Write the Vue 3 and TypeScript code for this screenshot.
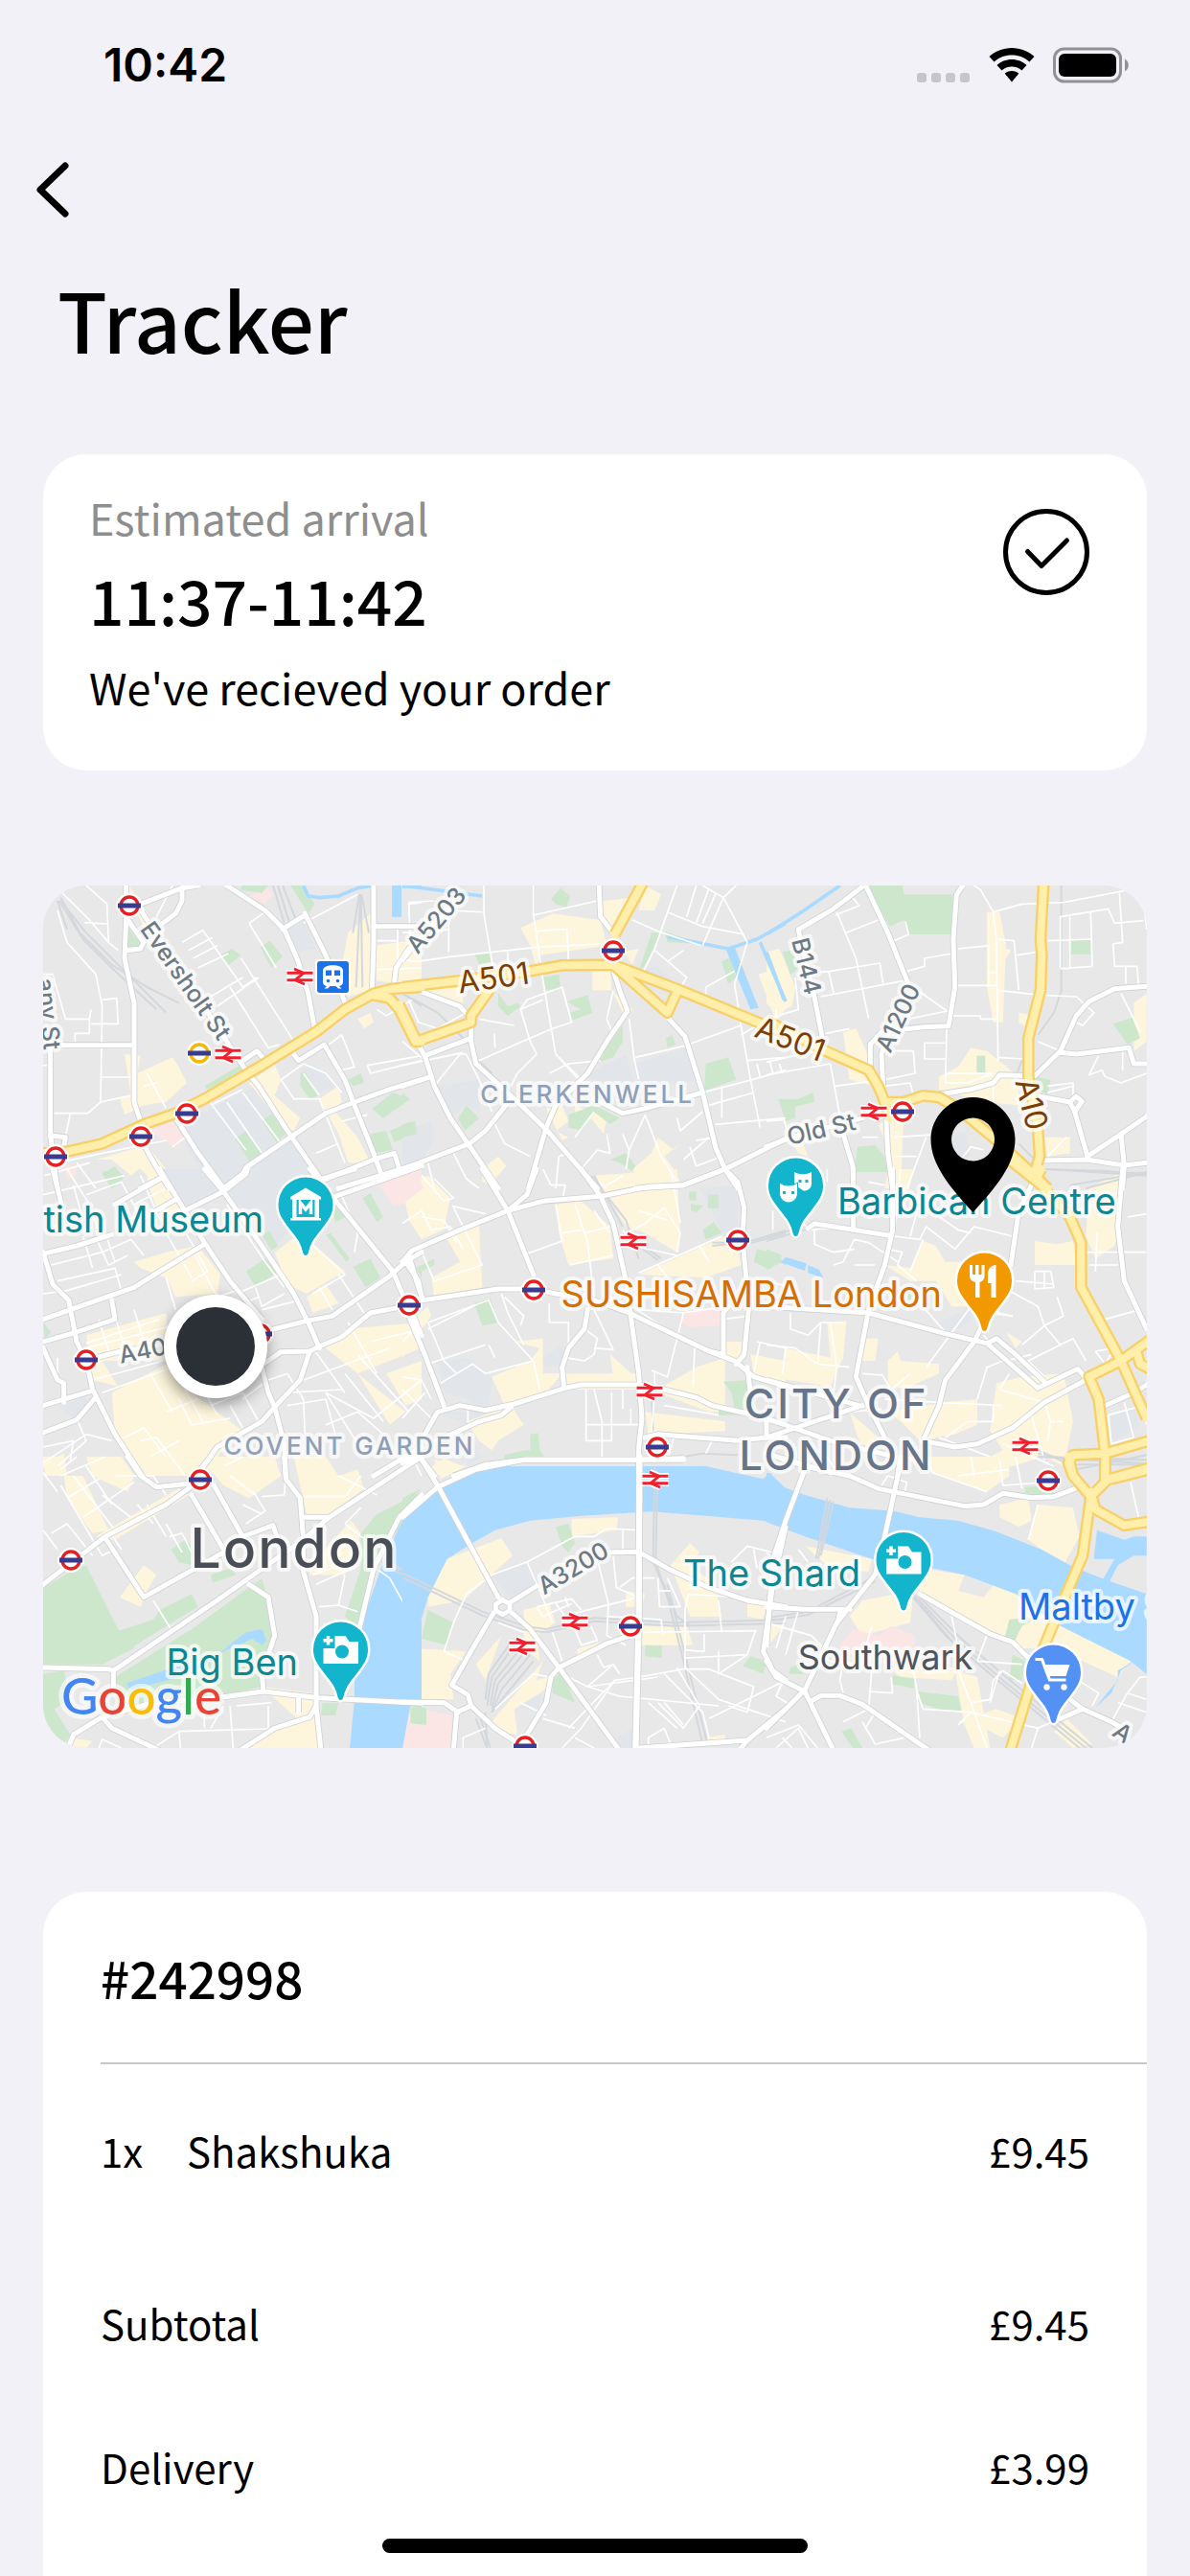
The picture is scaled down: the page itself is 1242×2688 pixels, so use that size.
<script setup lang="ts">
interface Tile {
  x: number
  y: number
  built: string[]
  campus: string[]
  park: string[]
  health: string[]
  water: string[]
  canal: string[]
  rail: string[]
  lane: string[]
  road: string[]
  trunk: string[]
}
interface Label {
  text: string
  x: number
  y: number
  kind: string
  turn?: number
}
interface Spot {
  x: number
  y: number
}
interface OrderLine {
  label: string
  price: string
}

// Map sheets: each covers 400 x 320 units, plotted at three points per unit.
const tiles: Tile[] = [
  {
    x: 40, y: 920,
    built: ['275,0 330,80 370,150 345,170 300,80', '970,160 1040,100 1040,340 970,360 940,310', '1050,200 1200,180 1200,330 1060,310', '270,540 320,545 310,600 420,550 440,580 465,630 400,690 330,700 270,730 255,680 290,670', '660,630 740,570 760,620 740,670 820,740 800,780 770,770', '880,680 940,640 950,690 930,720 1000,800 1040,880 970,880 940,790', '320,800 400,900 440,960 380,960 300,880', '180,870 320,830 340,880 290,920 230,870', '1000,430 1040,410 1050,440 1020,460'],
    campus: ['430,760 680,640 790,790 650,880 570,960 490,880', '770,150 830,120 870,210 810,220', '650,890 800,800 900,930 860,960 580,960', '820,590 860,570 930,640 880,660'],
    park: ['278,140 325,200 280,210', '570,230 605,210 635,230 590,265', '695,205 725,185 765,235 730,270', '520,640 640,570 650,590 530,650', '820,600 835,595 880,670 850,680 820,640', '970,620 1010,600 1020,630 985,640', '1045,710 1110,660 1165,680 1080,740', '1100,780 1170,750 1185,785 1115,815', '1040,790 1090,780 1110,840 1050,850', '615,805 650,780 700,850 660,875', '700,750 730,725 775,790 745,815', '200,915 240,890 265,930 230,960', '640,12 720,12 700,35 630,25', '790,12 830,12 865,70 845,100'],
    health: ['660,45 720,20 735,40 710,70', '350,780 420,750 460,810 420,830 380,800', '80,880 120,900 110,930 90,930', '1065,930 1200,880 1200,960 1080,960'],
    water: ['1107,12 1137,12 1137,110 1107,110', '1140,12 1200,12 1200,22 1140,20'],
    canal: ['830,12 845,45 880,50 940,45 1000,20 1050,12'],
    rail: ['70,50 130,160 230,260 340,330 440,380', '70,60 150,160 240,250 400,410', '65,60 140,180 230,270 370,400', '60,60 90,150', '735,12 770,130', '750,12 785,125', '765,12 805,115', '1005,40 985,160', '1008,40 995,330', '1010,40 1015,330', '1012,40 1035,160', '1140,350 1200,390'],
    lane: ['70,30 160,120 220,190 250,215', '150,12 215,70 220,190', '145,128 215,132', '60,90 90,190 180,290 200,390 195,690', '15,290 45,290 85,430 160,430 165,400', '200,370 245,365 250,445 165,445', '115,500 115,475 160,475 160,430', '195,612 300,612', '50,725 155,725 195,690 310,665', '100,725 85,800', '450,190 515,152 640,330 685,300', '470,215 545,175', '485,240 560,200', '500,270 595,225', '540,360 640,300', '660,130 710,95', '660,130 745,270', '560,390 690,300', '600,330 720,520 755,510', '635,240 800,500', '420,12 370,110', '330,640 370,630', '340,600 400,710', '830,130 1000,40', '1055,185 1125,185', '1060,275 1200,270', '1125,150 1125,250', '1160,110 1160,70 1200,65', '760,620 830,570 900,600 950,660', '760,620 800,680 880,680 960,880', '830,600 880,670', '1030,575 1200,545', '1030,575 1040,600 1200,560', '910,510 950,480 990,580 950,590', '950,750 1030,730', '870,850 940,820', '1060,400 1090,420 1170,370', '590,690 700,850', '640,660 760,820', '530,680 650,840', '60,880 200,850 400,810', '120,880 180,960', '15,575 35,575', '20,920 160,880', '420,830 460,800', '540,700 640,650'],
    road: ['275,12 275,120 270,240 300,380 300,500 300,690 320,750', '320,70 450,20 450,60 430,100 390,130', '450,20 500,12', '590,12 710,90 770,150 810,240 845,350 865,460', '325,95 360,150 570,470 650,590 690,640 780,780 890,940', '280,120 330,190 320,210 275,215', '40,512 300,512', '38,500 38,790 45,860 60,960', '38,795 85,800 80,830', '835,100 900,230 965,390', '765,148 835,105', '1050,12 1050,200 1045,340', '1050,140 1200,140', '1200,180 1160,210 1120,270 1110,360', '800,540 815,560 895,510 960,620 990,700 1050,850 1075,920', '640,560 685,530 710,560', '1200,620 1100,650 990,690 900,725 790,800 650,895 640,915 580,960', '430,740 500,850 580,960', '320,800 350,860 410,960', '890,935 1050,870 1115,850 1130,900', '940,960 1200,880', '320,960 390,925'],
    trunk: ['-15,850 15,850 90,845 200,820 330,760 430,725 520,680 700,575 870,470 960,400 1050,350 1110,335 1200,330', '1050,355 1100,365 1130,400 1180,500 1200,500'],
  },
  {
    x: 420, y: 920,
    built: ['370,145 470,100 620,120 640,200 430,230 420,270 400,200', '630,60 720,50 680,130 650,160 620,100', '760,12 810,40 790,90 740,90', '595,270 650,270 655,340 595,340', '0,200 40,180 60,300 0,320', '450,710 500,700 520,750 480,780 520,800 500,810', '540,700 640,740 630,790 590,740 540,780', '690,220 740,210 720,260', '1115,290 1145,280 1200,400 1170,440', '1150,220 1180,210 1200,260 1200,300', '655,340 720,400 700,430', '720,900 780,850 800,800 850,840 870,820 820,860 850,900 870,940 740,940', '250,900 300,860 325,890 290,930 300,960 250,940', '80,340 190,310 190,380 130,360'],
    campus: ['720,570 890,520 930,620 740,650', '0,780 90,750 100,800 60,880 0,890', '100,640 240,620 240,720 200,700 150,740', '740,280 800,260 860,330 820,350', '560,610 700,540 730,640 700,650'],
    park: ['465,55 495,20 525,45 515,80 480,70', '225,225 275,220 280,250 240,260', '440,300 490,290 495,335 450,340', '300,350 330,390 360,380 370,390 330,420 300,390', '515,375 580,355 595,410 530,435 525,410 560,400 540,390', '780,160 810,160 760,260 740,280', '820,155 940,195 830,190', '1000,250 1030,235 1045,300 1020,320', '950,570 1020,550 1045,620 945,655', '650,500 690,450 690,500 660,550 615,565', '825,490 845,480 855,510 830,520', '175,740 200,700 240,740 195,780', '520,730 600,700 680,740 650,760 600,720 560,780 520,770', '0,760 40,750 45,790 0,800', '650,870 700,850 730,890 720,905 680,880', '0,660 20,680 0,700'],
    health: ['0,930 60,920 65,960 0,960'],
    water: ['1010,205 1040,205 1115,395 1090,400'],
    canal: ['0,12 250,45', '830,172 1020,210 1110,180 1200,130', '1120,190 1200,375'],
    rail: ['0,350 110,410 210,510', '240,560 280,600'],
    lane: ['410,12 410,100 430,240 445,340 480,540 580,640', '410,105 610,60', '0,245 45,250 150,235 420,205 620,195', '420,155 515,148 520,245', '330,220 330,280', '255,12 255,100 280,250 300,320', '140,90 250,95', '0,160 145,150', '145,40 145,220', '20,65 100,60', '20,65 25,200', '830,95 940,140 1070,165', '860,12 830,95 790,210 730,330', '920,12 890,110', '960,20 920,130', '980,40 940,130', '940,12 1005,50 940,200', '1045,12 1005,50 1080,190 1040,320 1060,450 1090,620 1120,770', '720,120 800,155 935,200', '790,215 890,300 860,350', '830,250 880,215', '950,385 950,330 1040,280', '660,340 640,430 660,480', '710,430 725,550 740,620', '730,550 880,515 1060,450', '240,560 400,490 470,460', '360,600 420,540 400,500 370,400 440,370', '370,400 390,370 500,330 530,440 470,460', '240,430 350,450', '288,476 290,520', '360,600 340,640', '460,600 520,570 620,560', '490,550 570,640', '600,720 540,800', '450,780 520,850', '760,730 810,860 860,940', '710,840 760,730', '690,790 710,840 700,900', '640,790 650,850 610,840 560,900', '940,660 1095,620 1200,590', '960,700 1100,660', '980,760 1200,740', '860,740 870,780 940,720', '1060,480 1110,450', '1080,560 1200,550', '1110,570 1120,610', '1150,560 1160,600', '1000,640 1000,740', '900,830 920,890 1000,860', '920,810 980,800', '880,870 960,800', '280,740 320,820 400,860', '80,880 100,960', '160,850 200,930 240,960', '100,640 180,540 200,540', '0,575 190,535', '0,500 70,560', '200,540 240,620 280,720', '480,960 490,860 520,850', '560,900 640,960', '20,370 50,440 110,460 200,410'],
    road: ['0,245 70,160 160,70', '615,0 620,110 660,160', '655,260 680,340 705,405 640,500 580,600 480,700 450,770 395,960', '60,345 180,390 215,430 215,500 230,570 340,670 450,775 610,960', '50,510 70,545 215,490', '70,545 100,640 150,740 205,820 300,960', '0,640 90,610', '0,900 210,820 260,780 340,680', '835,430 885,485 940,660 980,830 1010,900 1050,960', '600,680 690,725 760,710 940,660', '730,960 880,950 1010,900 1200,805'],
    trunk: ['0,330 180,310 400,280 500,262 660,260 870,340 1100,435 1200,475', '665,165 755,0', '660,260 830,410 860,345', '275,335 215,420 215,440 45,500 -10,385'],
  },
  {
    x: 800, y: 920,
    built: ['690,95 730,95 750,200 740,440 710,440 690,330', '0,220 40,210 90,330 80,390 30,410 0,380', '540,610 600,580 640,520 690,530 790,610 790,700 680,690 540,650', '240,470 280,460 330,570 340,640 260,620', '870,800 950,800 950,850 880,860', '350,760 430,720 420,960 370,960 390,860', '1150,380 1190,350 1190,500 1150,530', '70,800 110,810 130,860 100,850', '720,200 765,215 750,240 720,240', '790,410 840,420 820,460 790,440'],
    campus: ['550,800 620,780 640,860 560,880'],
    park: ['315,12 425,12 430,40 585,40 580,165 445,165 430,120 385,140', '953,183 1015,183 1015,227 953,227', '50,220 80,215 100,270 75,290', '658,545 685,545 685,597 658,597', '37,680 100,680 145,660 150,690 90,705 90,740 60,750', '285,830 340,825 370,860 378,905 275,908', '1085,445 1145,425 1170,490 1130,510', '840,610 890,620 880,665 840,650'],
    health: [],
    water: [],
    canal: ['0,165 110,95 230,12', '0,220 55,370'],
    rail: ['923,12 923,340 900,410 850,480', '790,820 870,900 1050,905 1190,915', '950,950 1190,910', '800,560 780,610'],
    lane: ['220,95 280,240 320,430', '215,105 290,75 270,50', '250,160 350,120', '100,290 200,280 355,255 365,320', '170,360 430,310', '195,280 210,350', '440,280 495,265 495,240 580,225', '400,185 445,165 435,125', '460,330 565,405 420,435', '600,210 700,200', '725,180 775,185 790,340', '785,230 850,220', '600,325 720,325', '695,200 695,320', '690,285 720,285', '650,12 670,25 710,95 720,180 725,560', '710,95 800,70 930,65 1190,15', '720,340 860,355 970,360 1025,410 990,450 970,440', '880,185 1020,180', '920,270 920,110 1070,85 1090,130 1180,122', '950,110 950,270 1020,265 1015,95', '920,272 950,272', '1105,35 1115,190 1085,195 1090,265 1160,265 1165,320', '1125,265 1125,320', '580,420 670,420 670,430 725,430', '565,430 560,630 630,630 710,600', '560,600 710,600', '495,505 560,505', '495,505 495,555 560,555', '390,530 460,530 465,600 370,620', '185,475 260,460', '0,605 200,570 240,790', '215,640 325,625', '370,640 450,630 460,670', '1110,350 1170,470', '850,500 920,530', '1040,545 1010,605 1050,590 1060,610 1110,630 1190,600', '1115,530 1115,590', '880,640 960,630 960,690', '880,660 960,640', '400,800 550,790', '500,800 440,960', '725,550 800,555', '710,640 710,700', '30,400 30,470', '0,430 100,400 90,300', '0,565 190,520', '40,570 50,600', '0,750 55,745 70,800', '300,800 350,800', '600,880 640,830 680,840', '320,940 370,950', '1190,150 1185,100', '880,860 940,800', '400,860 470,860'],
    road: ['305,12 210,85 100,150 110,200 150,360 175,490', '305,0 380,160 440,310', '325,590 325,510 360,470 490,455 570,452 590,330 585,180 595,40 615,12', '365,640 360,540 380,480', '545,665 640,650 710,630 730,605 840,608 920,530 970,420 1010,375 1090,335 1190,328', '920,535 970,540 1135,520 1150,570 1190,570', '840,670 950,690 965,720 1005,860', '950,690 970,672 988,688 965,720', '865,873 1000,870 1120,888 1190,880', '1005,860 1110,790 1190,735', '1110,790 1120,888 1115,960', '0,830 80,800 260,750 300,740', '240,790 270,890 272,960', '375,750 380,850 395,960'],
    trunk: ['868,0 858,180 862,230 858,340 820,490 820,610 850,780 855,860 840,910', '0,435 185,530 320,590 350,640 370,690 385,740', '370,690 430,690 490,670 540,675 600,710 720,810 850,930 880,960'],
  },
  {
    x: 40, y: 1220,
    built: ['300,290 400,260 500,240 570,330 560,390 430,400 400,340 320,310', '740,260 820,200 960,320 840,390 780,360', '350,0 390,0 420,80 460,120 500,200 400,200 340,40', '150,520 400,450 410,600 200,600 250,680 170,660', '230,700 420,600 480,700 560,760 640,820 560,900 520,960 330,960 240,830', '960,500 1200,480 1200,560 1000,640 900,560', '1000,640 1150,760 1100,800', '840,400 900,360 940,420 860,450', '1090,640 1200,600 1200,720 1150,740', '20,920 80,890 90,960 20,960'],
    campus: ['390,0 640,0 650,20 800,80 780,200 730,250 640,120 570,70 450,130', '60,740 150,710 160,740 110,780'],
    park: ['200,10 240,0 270,20 230,60', '650,320 710,280 750,320 680,370', '700,205 725,195 750,240 730,255', '985,305 1040,280 1070,340 1025,370', '1015,90 1040,75 1080,150 1060,165', '900,205 915,200 975,280 965,290', '15,480 40,510 20,530', '920,120 955,115 960,150 930,165', '1180,310 1200,300 1200,340'],
    health: ['1065,50 1200,0 1200,90 1115,115', '80,0 120,0 110,30 90,30'],
    water: [],
    canal: [],
    rail: [],
    lane: ['15,80 270,20', '90,0 160,110 190,200', '15,120 60,110', '110,50 140,160 30,190', '150,80 260,40 320,150', '140,210 170,310', '180,215 220,300 280,270', '210,200 240,290', '40,300 200,260 290,220 330,270', '60,350 240,310 260,380', '15,390 90,380 260,330', '320,20 400,200 480,340', '400,60 300,110', '280,160 420,100', '440,160 530,320 480,350', '400,340 430,440', '480,250 560,400 620,380', '560,390 600,440 690,400', '680,370 700,430 770,390', '700,440 820,410', '620,390 760,330', '590,110 710,290 770,370', '940,60 1000,200 990,260', '820,200 960,330 860,390', '880,370 920,440', '940,330 1020,450', '150,560 420,490', '150,545 380,470', '190,470 220,570', '240,460 270,560', '300,440 330,540', '60,640 60,590', '170,660 390,600', '200,700 420,620', '350,640 420,760', '420,620 520,800', '480,620 560,770', '540,740 640,700 690,790', '600,740 640,810', '640,720 720,660', '400,760 500,720', '440,720 480,800 600,780', '250,850 330,810 400,900', '320,850 370,840 460,960', '350,900 440,850', '720,660 780,640 830,720 835,830', '770,700 950,690', '800,690 860,560 960,700', '830,660 1100,560', '900,700 1050,780 1200,660', '960,640 1080,790', '1000,580 1160,760', '780,740 900,720 930,830', '900,800 1000,760 1080,830', '970,480 1060,640', '1040,540 1200,500', '1000,860 900,700', '15,870 110,850 100,910', '120,780 150,850 60,930', '15,920 150,830 230,850'],
    road: ['45,0 75,120', '15,265 120,240 230,205', '240,110 390,25', '300,170 430,95', '380,0 440,100 520,230 600,350 700,470', '520,235 380,320 300,370 100,440 15,470', '15,260 45,360 95,410 120,540 150,600 170,690 240,830 325,960', '15,540 120,510 240,470 230,410', '15,560 60,660 80,670 80,730', '15,740 165,695', '15,825 120,785 175,720', '150,598 260,570 390,550', '520,0 580,70 700,240 800,390 850,490 880,560', '460,130 580,70 650,15 655,0', '850,0 900,60 1110,320 1140,390 1161,427', '890,30 990,0', '930,85 1200,-10', '700,510 840,475 920,460 1100,335 1150,290 1200,260', '1161,427 1040,450 950,525 880,555 850,570 760,572 690,620', '1150,290 1190,350 1200,400', '850,570 820,660 740,745 700,790 560,870 510,940', '700,620 720,700 740,745 770,860 775,960', '1050,960 1200,870', '1161,427 1200,520'],
    trunk: [],
  },
  {
    x: 420, y: 1220,
    built: ['0,60 80,20 150,90 130,190 60,220 20,160', '480,110 560,100 650,180 660,280 520,300 490,200', '600,20 860,0 870,200 860,260 760,200 700,180', '130,200 240,170 250,370 100,400 90,340 180,290', '740,330 1010,210 1050,240 1060,300 950,340', '280,650 400,600 430,560 350,540 440,530 440,640 500,640 450,700 320,740', '510,640 740,640 735,690 500,690', '650,580 740,660 660,650', '800,690 920,620 1010,590 1010,760 960,760 800,700', '200,790 340,740 380,800 300,850 280,880 240,850', '760,760 1010,790 1010,820 770,830', '1010,540 1070,540 1070,600 1010,600', '0,500 80,430 90,460 0,590', '1090,580 1200,600 1200,670 1100,640', '130,905 190,930 120,960 80,940'],
    campus: ['110,600 200,590 280,650 270,760 200,720 130,700', '110,760 270,760 200,800', '220,850 250,900 200,930', '440,590 500,550 510,610 440,620', '930,60 1050,50 1050,180 1000,200'],
    park: ['225,420 275,405 300,480 250,490', '45,310 100,280 100,300 50,325', '940,190 975,165 1000,200 950,220', '957,80 990,80 990,122 957,122', '898,70 920,70 920,98 898,98', '903,108 943,115 920,135 903,130', '1110,250 1190,270 1150,315 1100,290', '1005,665 1080,660 1080,770 990,770 990,750 1040,750 1030,700', '320,895 385,880 400,880 400,830 425,825 430,880 445,900 320,910'],
    health: ['885,445 1000,430 1000,490 900,495 870,480', '0,30 50,15 65,60 0,110'],
    water: ['230,960 330,930 950,930 1040,960', '1185,290 1200,280 1200,300'],
    canal: [],
    rail: ['590,20 700,160 740,280', '600,20 690,180', '700,200 810,280', '740,240 800,285', '1080,235 1200,200', '1080,228 1200,192', '970,240 1020,235', '970,230 1020,230', '780,700 785,820', '880,900 940,890 1050,895'],
    lane: ['60,20 130,100 160,90 100,30', '0,170 60,130 90,190', '90,190 150,180 190,250', '60,150 130,160 170,230', '155,115 260,140', '160,120 200,200 250,300 100,350', '60,260 100,350', '390,265 500,225 480,110', '540,110 580,230 600,400', '570,200 650,180', '525,300 660,270', '500,200 560,190', '600,130 650,200', '440,0 465,50 510,50 500,100', '700,200 760,170 820,120 870,200 860,260', '740,130 830,160', '640,50 690,20', '840,0 870,170', '690,190 720,240 860,270', '740,325 1000,210', '800,300 830,340', '930,240 960,290', '80,480 270,410 300,480 410,600 430,690', '80,480 130,600 170,640', '80,610 260,550', '120,670 220,610 260,640 410,600', '80,500 220,430', '270,550 290,590', '310,390 330,450 380,550', '320,400 380,460 370,490', '460,420 460,480 520,480 520,550', '600,440 660,565 600,560', '570,500 610,530 600,580 570,600 510,590', '740,440 880,450 830,650 780,630', '720,430 810,490', '880,450 1010,430', '1000,470 1080,460', '1110,540 1200,560', '1120,540 1100,640', '790,630 790,720', '915,560 910,680', '575,690 575,850 655,850 655,700', '575,800 740,800', '600,690 625,790 625,910', '690,690 690,750', '715,750 715,800', '820,740 990,770', '850,840 830,910', '970,850 950,890', '205,750 205,790', '0,650 60,660 90,720', '0,780 70,700', '0,540 60,480', '0,690 90,780', '790,700 780,820', '1160,100 1200,130', '1160,130 1160,190'],
    road: ['250,0 330,130 410,330', '420,0 390,80 330,130 180,190 30,255 0,290', '330,130 440,100 620,85 770,55 880,50 1010,0 1050,40 1070,120 1065,220 1085,430 1070,580 1045,610', '560,0 620,85 660,170 700,350 715,460 740,640 750,780 740,870 740,960', '20,270 50,370 65,410 300,375 411,375 480,390 600,410 710,450 960,570 1040,600 1100,650 1200,680', '1020,430 1005,450 1005,580 960,570', '580,440 570,500 520,560 500,620 505,675', '20,460 70,580 130,740', '70,830 110,760 180,740 260,755 350,735 510,685 560,675 740,675 820,690 920,715 970,740 1080,765 1200,800', '110,850 240,790 310,770 340,745', '1080,620 1090,700', '760,840 800,830 1050,850 1140,840 1200,840', '1140,840 1140,790', '160,960 260,925 380,910 740,910 880,905', '0,920 50,895 100,960'],
    trunk: [],
  },
  {
    x: 800, y: 1220,
    built: ['390,0 460,0 440,100 400,130', '1010,60 1110,10 1110,170 1090,240 1030,280 1000,210', '840,225 910,235 960,225 970,300 840,300', '490,225 530,240 560,290 620,290 600,330 640,430 580,430 530,350 450,350 370,300 450,310', '190,480 250,475 240,590 200,680 0,650 0,600 60,610 60,560 200,590', '380,600 410,570 420,600 540,610 540,640 450,680 380,690', '290,530 350,530 340,600 290,600', '560,730 660,720 660,800 590,830 530,840 500,870 420,790 380,760', '720,670 800,650 930,640 960,790 930,930 870,900 700,950 680,910 740,880 700,820', '260,760 360,850 300,880', '750,510 800,540 780,560'],
    campus: ['1080,770 1150,740 1170,800 1080,860', '540,480 640,430 640,480 560,520'],
    park: ['0,250 40,265 50,290 0,315', '285,0 380,0 378,10 285,10', '442,388 456,388 456,408 442,408'],
    health: [],
    water: ['60,275 125,295 120,318 45,292', '130,300 165,315 178,340 130,325', '0,950 15,955 15,960 0,960'],
    canal: [],
    rail: ['0,225 150,180', '0,215 140,172', '880,0 1190,20', '1000,60 1190,10', '850,890 950,910 1190,910', '830,870 950,925 1190,925', '970,940 1190,895'],
    lane: ['150,185 150,235 210,260 275,250', '210,300 240,290 275,220 320,230 410,290', '275,300 340,300', '130,180 60,150 60,60', '20,110 20,40', '400,210 480,220 500,180 590,250 650,180 770,210', '500,120 600,190 640,200', '380,250 425,260 410,300 470,350', '450,320 490,220', '330,380 420,390', '0,550 90,560 160,610 260,620', '75,450 75,500 130,520 170,480 240,480', '160,610 170,480', '60,560 50,640', '200,480 220,620 210,700', '360,640 390,690 450,640', '300,640 360,645', '370,720 540,730', '660,720 690,620 740,600', '540,730 740,740', '560,840 630,790 710,790 710,740', '500,620 640,430 770,460', '680,520 750,600 830,580', '760,380 850,430 870,490 930,460 910,400', '780,350 900,360', '840,320 890,320 900,370 840,375 840,320', '870,320 870,375', '820,600 920,550 960,530 1000,600', '870,490 920,550', '870,490 800,550', '820,600 870,650', '730,690 760,640', '730,690 870,730 890,790 930,790', '890,790 880,850', '830,770 870,910', '1060,470 1170,440', '1030,570 1060,610 1090,560 1030,570', '1010,300 1100,300', '1000,260 1190,260', '1030,320 1035,200', '1130,150 1190,140', '1070,770 1180,740 1190,800', '1070,770 1080,860 1150,840', '1120,730 1150,840', '260,760 360,750', '420,0 400,200', '480,100 450,210', '130,190 280,180', '190,0 190,40', '740,860 900,930', '540,840 700,900', '0,350 80,370', '700,450 770,460', '480,420 560,510'],
    road: ['130,185 150,170 385,208', '272,0 272,185', '395,0 395,190 370,300 320,440 280,650 320,740 370,840', '0,430 320,450 560,515 690,545', '690,545 720,530 780,580 870,665', '690,545 850,685 975,625 1000,655', '830,50 790,130 765,300', '670,500 650,540 560,660 540,740 490,850', '1115,0 1100,180 1120,350 1190,500', '0,660 290,740', '0,840 300,740', '0,780 200,850 400,900', '490,850 590,870 660,860 770,810 870,730 1000,660', '1050,745 1150,700 1190,675', '420,900 410,960', '0,890 200,950'],
    trunk: ['760,-30 860,50 950,150 985,230 985,370 1110,600 1190,780', '860,0 845,30', '1200,535 1110,600 1010,650 1040,720 1060,890 1200,850', '1060,890 960,895 945,920 960,960', '1160,575 1170,610 1200,625', '1060,890 1060,960', '1200,940 1080,970'],
  },
  {
    x: 40, y: 1520,
    built: ['15,0 60,0 15,40', '150,0 260,0 300,60 280,110 170,60', '180,250 440,100 470,120 240,260', '80,60 140,60 220,230 170,240 90,130', '500,0 740,0 760,60 660,130 580,90', '800,0 900,0 940,60 1000,40 1020,100 900,190 840,180', '255,440 330,340 370,370 340,420 320,470', '850,340 980,200 1010,240 960,370 850,370', '700,720 860,740 880,912 640,912 720,850 810,820', '990,770 1100,780 1160,780 1140,912 975,912', '100,880 170,890 150,912 100,912', '50,740 90,720 110,770'],
    campus: ['1120,780 1200,770 1200,780'],
    park: ['15,410 100,360 150,340 200,440 250,540 300,600 200,650 15,650', '240,690 480,540 700,380 720,450 740,560 700,720 580,750 250,790', '15,680 80,670 100,760 50,790 100,870 70,912 15,912', '250,545 360,510 380,480 480,430 500,470 400,530 290,600', '415,290 460,260 490,290 480,340 440,330', '1010,240 1060,180 1200,110 1200,140 1100,260 1050,330 1010,480 1000,540 960,500 1010,350', '540,370 600,350 620,370 545,395', '890,770 940,770 930,810 885,810', '1160,780 1200,780 1200,840 1165,830'],
    health: ['1150,840 1200,840 1200,912 1140,912'],
    water: ['1200,140 1130,220 1080,330 1020,500 990,620 990,760 975,912 1140,912 1165,780 1200,765', '275,710 420,660 560,620 650,550 700,540 715,575 700,590 670,570 580,610 480,680 290,730'],
    canal: [],
    rail: ['1080,320 1200,385', '1085,340 1200,400', '1075,330 1200,378'],
    lane: ['70,60 210,0', '40,240 90,210 170,310', '15,230 60,290', '70,90 200,310 240,290', '110,60 240,230', '150,30 230,150', '90,130 190,70', '140,190 300,80', '240,60 360,60 400,120', '200,120 290,190', '310,150 360,210', '220,230 260,290', '340,150 400,250', '400,210 450,300', '360,450 415,540', '410,250 450,240 480,300', '600,60 680,120 710,170 650,210', '700,125 770,120 775,60', '640,150 700,180', '580,30 640,0', '830,125 960,125 1010,60', '940,60 1060,120', '960,210 1010,250 1100,300', '960,210 1010,160', '870,400 980,350', '880,470 940,465 1000,485', '940,465 960,370', '860,370 1000,320', '1180,20 1200,60', '520,770 520,850', '360,912 440,860 720,852', '440,860 445,912', '600,780 610,912', '620,780 730,770', '720,780 720,850', '540,850 580,780', '190,912 200,885 260,912', '15,50 60,110', '1065,355 1100,380 1150,470 1200,510', '120,0 70,40'],
    road: ['280,0 320,60 370,95 470,85 540,0', '507,73 400,150 210,250 15,400', '480,120 580,290', '550,90 640,250', '210,255 330,440 580,300', '640,250 735,215 750,260', '770,0 775,70 820,130 830,260 830,360 870,500 870,780 885,920', '1200,0 910,190 830,190', '910,190 830,260 560,450 235,670 220,665 15,660', '235,670 235,740', '660,400 720,440 740,560 700,680 705,735', '1200,120 1130,190 1050,350 1000,560 960,720', '90,920 110,870 200,815 360,770 560,755 705,735 880,755 1200,772', '200,815 230,850 380,920', '630,920 740,850 850,815 870,780', '815,755 815,800'],
    trunk: [],
  },
  {
    x: 420, y: 1520,
    built: ['140,320 310,255 345,310 300,350 190,450 80,470 80,430', '530,195 675,190 670,230 600,240 530,250', '40,600 200,610 150,680 160,760 20,760', '380,480 460,460 480,520 420,560 430,640 380,600', '270,840 330,770 440,640 420,700 520,670 430,740 350,790 360,870 300,860', '230,650 310,560 260,700', '740,530 890,530 910,590 740,590', '700,420 760,430 750,470 700,470', '840,340 900,270 930,300 900,340 980,400 1000,500 900,500 870,420', '1080,450 1140,460 1130,510 1080,500', '550,600 700,560 540,640', '950,880 1010,870 1010,890 950,900', '0,0 30,0 0,30', '100,10 200,30 120,70'],
    campus: ['280,370 390,330 430,400 340,450', '670,880 720,850 720,912 680,912', '360,780 440,740 420,800'],
    park: ['480,220 520,210 540,270 520,300 500,280', '80,480 160,520 140,590 60,570', '25,785 75,785 75,840 25,835', '470,700 500,670 540,770 470,740', '760,590 812,592 812,630 760,625', '1065,655 1090,625 1140,640 1130,680', '0,130 60,100 0,160'],
    health: ['15,780 155,810 150,912 5,912'],
    water: ['0,200 110,90 230,40 330,30 950,30 1040,50 1130,70 1150,50 1200,100 1200,220 1130,200 780,172 560,185 400,200 290,230 220,270 140,320 80,440 50,540 20,760 0,912'],
    canal: [],
    rail: ['0,365 250,485 380,530 450,540 600,505 850,520 1200,510', '0,378 250,497 380,542 450,550 600,515 850,530 1200,522', '790,30 785,330 860,500 900,530', '798,90 793,330 840,470', '820,400 880,640 940,900', '830,400 890,640 955,900', '340,580 270,680 260,760', '350,590 280,690 265,780', '370,600 290,700 275,780', '385,610 300,710 280,790', '400,620 310,730 280,800', '410,640 320,750 280,800', '230,820 265,912', '245,820 275,912', '260,800 265,912'],
    lane: ['280,370 390,330 540,250 600,250 640,225 740,230', '390,330 430,420 470,520', '130,610 160,520 200,430 280,370', '130,610 200,640', '690,230 690,290', '610,320 645,460 640,560 700,590', '660,310 670,410 740,440', '680,410 720,380 790,380', '540,490 740,440', '420,470 530,445 560,480', '420,470 440,500 530,460', '510,440 520,470', '540,540 560,590 610,575 590,530', '470,550 500,640', '500,680 580,720 800,690', '640,500 810,510 815,560', '740,550 1110,545', '945,555 945,610 885,605', '885,480 885,660 990,760 1200,830', '885,480 895,430 1050,440', '990,450 1000,550', '885,630 1080,620 1105,545', '610,620 630,660', '630,660 660,650 680,680', '580,720 660,650', '740,690 880,665 960,665 1100,720 1080,800 1020,780', '665,700 560,850 500,912', '740,690 665,700 520,850', '820,680 940,800 960,880', '860,660 930,780', '580,720 680,750 990,780', '770,770 860,850', '800,770 880,850 930,780', '820,770 880,840', '960,820 1200,700', '770,912 770,880 820,850 840,900', '440,820 540,850', '540,880 600,912', '370,770 450,810', '190,912 190,880 260,850', '290,790 410,680 460,690', '800,380 805,470 870,470 830,380', '800,420 840,420', '1030,330 1080,280 1160,300', '1100,290 1110,350', '1170,750 1190,700', '990,610 990,680 1080,620', '480,460 510,500', '300,520 380,550'],
    road: ['55,0 110,90 300,440', '0,190 110,95 230,40 380,10 880,10', '314,448 336,462 336,482 314,494 292,482 292,462 314,448', '340,455 420,405', '640,300 740,298 840,355 960,410 1080,450 1200,470', '740,0 738,500 728,920', '744,0 742,500 732,920', '345,490 400,540 490,660 680,920', '285,490 220,600 155,715 205,745 215,780 170,800 160,920', '0,768 130,770 175,800', '215,780 290,850 350,890', '714,560 640,585 490,660 465,690 450,770 390,870', '1200,220 1160,400 1130,610 1160,670 1200,700', '740,912 1080,888 1200,790', '1060,912 1080,888'],
    trunk: [],
  },
  {
    x: 800, y: 1520,
    built: ['120,280 330,320 320,360 200,350', '480,350 620,370 600,420 680,440 720,390 900,500 1140,640 1100,690 900,600 800,600 600,500 480,420', '300,450 460,420 450,520 300,560 260,500', '430,0 760,0 760,60 690,110 500,40', '730,150 820,130 830,200 790,220 730,190', '850,150 960,160 980,250 930,340 820,260', '590,670 660,690 700,912 650,912 620,840', '600,830 720,790 800,820 740,880 680,850', '900,860 940,820 1020,900 960,912', '380,660 600,660 580,700 420,690', '0,530 60,520 0,600'],
    campus: [],
    park: ['760,510 860,500 800,530 770,590 745,570', '770,620 810,640 800,700 760,700', '395,685 465,695 460,725 395,712', '475,735 600,750 610,795 550,795 480,770', '235,860 265,850 300,912 270,912', '810,95 900,90 900,120 810,115', '75,660 110,645 115,680 70,680'],
    health: ['230,590 270,540 350,560 390,530 465,560 460,600 370,650 230,610'],
    water: ['0,50 40,90 120,120 260,160 400,170 480,190 600,200 720,235 860,290 960,345 1060,385 1190,430 1190,680 1140,640 1000,570 900,520 780,430 620,370 500,345 330,320 120,250 0,205', '1035,230 1120,260 1150,250 1190,250 1190,310 1150,310 1100,340 1070,400 1050,390 1090,320 1025,320', '1150,640 1110,670 1080,740 1030,785 1100,700 1100,670'],
    canal: [],
    rail: ['460,430 600,580 740,700 1000,912', '470,430 610,570 750,690 1020,912', '450,430 560,560 700,680 980,912', '465,440 590,590', '190,130 155,320', '200,135 162,320', '210,140 170,310', '0,505 130,485 330,380', '0,515 130,495 340,390', '850,0 1190,10', '850,0 1190,22'],
    lane: ['500,0 520,50 690,110', '600,60 760,40', '640,0 650,60', '730,10 740,90 880,80', '780,0 800,100', '1140,80 1165,190', '0,520 140,560 180,600', '60,500 30,600', '100,480 60,620', '240,640 230,700 240,740', '30,750 60,690', '30,750 80,780', '270,650 200,640 160,620', '330,660 320,790', '390,690 395,740 320,735', '460,660 470,730 490,790 640,800', '470,730 480,880', '320,790 240,830', '340,800 310,850 330,880', '600,670 640,770 700,760 710,700', '640,770 690,912', '600,840 640,800', '640,800 850,850 920,820', '710,700 740,670 800,710', '690,560 660,640', '660,640 800,650', '580,500 600,600', '730,670 700,770', '0,880 100,840 160,912', '50,880 80,912', '1080,830 1130,740 1190,760', '1130,740 1170,690 1190,690', '1100,770 1190,800', '850,850 830,912', '960,690 1040,740 1020,780', '190,0 220,50', '360,90 380,60 440,80 430,120', '0,300 30,330', '100,290 130,330', '820,260 850,150', '330,530 310,600', '30,912 100,850 130,912', '300,830 340,900 430,880'],
    road: ['120,40 60,200 20,320 0,590', '0,-10 120,30 260,60 350,100 620,155 680,150 740,115 830,128 900,125 980,95', '420,20 370,250 340,370 220,520 120,730 0,850', '0,470 120,478 260,478', '230,485 225,510', '480,430 700,555 770,580 820,630', '0,640 30,690 120,735 210,920', '140,765 170,748 230,748 300,775 510,920', '920,820 990,790 1080,830 1130,860', '950,760 990,790'],
    trunk: ['945,0 960,60 1015,125 1070,70 1200,35', '1015,110 1030,165 1120,215 1200,203', '1015,125 990,310 900,520 850,640 760,930', '1060,0 1060,70'],
  },
]

const labels: Label[] = [
  { text: 'Eversholt St', x: 194, y: 1023, kind: 'street', turn: 55 },
  { text: 'any St', x: 51, y: 1058, kind: 'street', turn: 84 },
  { text: 'A5203', x: 455, y: 960, kind: 'street', turn: -50 },
  { text: 'B144', x: 842, y: 1008, kind: 'street', turn: 76 },
  { text: 'A1200', x: 937, y: 1062, kind: 'street', turn: -65 },
  { text: 'Old St', x: 857, y: 1178, kind: 'street', turn: -13 },
  { text: 'A40', x: 149, y: 1409, kind: 'street', turn: -11 },
  { text: 'A3200', x: 598, y: 1636, kind: 'street', turn: -31 },
  { text: 'A', x: 1172, y: 1808, kind: 'street', turn: 35 },
  { text: 'A501', x: 515, y: 1020, kind: 'trunk-name', turn: -8 },
  { text: 'A501', x: 825, y: 1084, kind: 'trunk-name', turn: 21 },
  { text: 'A10', x: 1077, y: 1152, kind: 'trunk-name', turn: 76 },
  { text: 'CLERKENWELL', x: 613, y: 1151, kind: 'district' },
  { text: 'COVENT GARDEN', x: 365, y: 1518, kind: 'district' },
  { text: 'CITY OF', x: 873, y: 1480, kind: 'borough' },
  { text: 'LONDON', x: 873, y: 1534, kind: 'borough' },
  { text: 'London', x: 307, y: 1636, kind: 'city' },
  { text: 'Southwark', x: 924, y: 1742, kind: 'suburb' },
  { text: 'tish Museum', x: 275, y: 1286, kind: 'poi sight end' },
  { text: 'Barbican Centre', x: 874, y: 1267, kind: 'poi sight start' },
  { text: 'SUSHISAMBA London', x: 983, y: 1364, kind: 'poi food end' },
  { text: 'The Shard', x: 898, y: 1655, kind: 'poi sight end' },
  { text: 'Big Ben', x: 311, y: 1748, kind: 'poi sight end' },
  { text: 'Maltby S', x: 1063, y: 1690, kind: 'poi shop start' },
]

const tubes: Spot[] = [
  { x: 135, y: 945 }, { x: 195, y: 1162 }, { x: 147, y: 1186 }, { x: 58, y: 1207 }, { x: 640, y: 992 }, { x: 942, y: 1160 },
  { x: 90, y: 1419 }, { x: 272, y: 1392 }, { x: 427, y: 1362 }, { x: 209, y: 1544 }, { x: 74, y: 1628 }, { x: 557, y: 1346 },
  { x: 770, y: 1294 }, { x: 686, y: 1510 }, { x: 658, y: 1697 }, { x: 548, y: 1822 }, { x: 1094, y: 1545 },
]
const stations: Spot[] = [
  { x: 313, y: 1019 }, { x: 238, y: 1100 }, { x: 912, y: 1160 }, { x: 661, y: 1295 }, { x: 678, y: 1452 },
  { x: 684, y: 1544 }, { x: 600, y: 1692 }, { x: 545, y: 1718 }, { x: 1070, y: 1509 },
]
const pinShape =
  'M0,53C-3,53 -3,48 -5,43C-8,35 -13,31 -20,21C-26,13 -28.5,8 -28.5,0A28.5,28.5 0 1 1 28.5,0C28.5,8 26,13 20,21C13,31 8,35 5,43C3,48 3,53 0,53Z'

const totals: OrderLine[] = [
  { label: 'Subtotal', price: '£9.45' },
  { label: 'Delivery', price: '£3.99' },
]

const place = (t: Tile): string => `translate(${t.x} ${t.y}) scale(${1 / 3})`
const at = (s: Spot): string => `translate(${s.x} ${s.y})`
const labelPlace = (l: Label): string => (l.turn === undefined ? at(l) : `${at(l)} rotate(${l.turn})`)
</script>

<template>
  <main class="screen">
    <header class="status">
      <time class="clock">10:42</time>
      <div class="indicators">
        <svg class="signal" viewBox="0 0 56 38" aria-hidden="true">
          <rect v-for="n in 4" :key="n" :x="(n - 1) * 15" y="27" width="10" height="10" rx="3" />
        </svg>
        <svg class="wifi" viewBox="0 0 48 38" aria-hidden="true">
          <path d="M24 1C33 1 41.500 4.500 47.500 10L42.500 15.500C37.500 11 31 8.500 24 8.500S10.500 11 5.500 15.500L.5 10C6.500 4.500 15 1 24 1Z" />
          <path d="M24 13C30 13 35.500 15.300 39.500 19L34.500 24.500C31.500 22 28 20.500 24 20.500S16.500 22 13.500 24.500L8.500 19C12.500 15.300 18 13 24 13Z" />
          <path d="M24 25C27 25 29.500 26 31.300 27.800L24 36.500L16.700 27.800C18.500 26 21 25 24 25Z" />
        </svg>
        <svg class="battery" viewBox="0 0 80 38" aria-hidden="true">
          <rect x="1.500" y="2" width="69" height="34" rx="10" fill="none" stroke="#929196" stroke-width="3" />
          <rect x="6" y="7" width="60" height="24" rx="6" />
          <path d="M75 12.500C80 15 80 23 75 25.500Z" fill="#929196" />
        </svg>
      </div>
    </header>

    <nav class="nav">
      <button class="back" type="button" aria-label="Back">
        <svg viewBox="0 0 36 60" aria-hidden="true"><path d="M31 5L5 30L31 55" /></svg>
      </button>
    </nav>

    <h1 class="title">Tracker</h1>

    <section class="card arrival">
      <div>
        <p class="caption">Estimated arrival</p>
        <p class="window">11:37-11:42</p>
        <p class="state">We've recieved your order</p>
      </div>
      <svg class="tick" viewBox="0 0 90 90" aria-hidden="true">
        <circle cx="45" cy="45" r="42.500" />
        <path d="M25.500 44.500L40 59.500L66.500 33" />
      </svg>
    </section>

    <section class="map" aria-label="Delivery map">
      <svg viewBox="45 924 1152 900">
        <g v-for="(t, i) in tiles" :key="'l' + i" :transform="place(t)">
          <polygon v-for="p in t.campus" :key="p" class="campus" :points="p" />
          <polygon v-for="p in t.built" :key="p" class="built" :points="p" />
          <polygon v-for="p in t.health" :key="p" class="health" :points="p" />
          <polygon v-for="p in t.park" :key="p" class="park" :points="p" />
        </g>
        <g v-for="(t, i) in tiles" :key="'w' + i" :transform="place(t)">
          <polygon v-for="p in t.water" :key="p" class="water" :points="p" />
          <polyline v-for="p in t.canal" :key="p" class="canal" :points="p" />
          <polyline v-for="p in t.rail" :key="p" class="rail" :points="p" />
          <polyline v-for="p in t.lane" :key="p" class="lane" :points="p" />
        </g>
        <g v-for="(t, i) in tiles" :key="'rc' + i" :transform="place(t)">
          <polyline v-for="p in t.road" :key="p" class="road-edge" :points="p" />
        </g>
        <g v-for="(t, i) in tiles" :key="'r' + i" :transform="place(t)">
          <polyline v-for="p in t.road" :key="p" class="road" :points="p" />
        </g>
        <g v-for="(t, i) in tiles" :key="'tc' + i" :transform="place(t)">
          <polyline v-for="p in t.trunk" :key="p" class="trunk-edge" :points="p" />
        </g>
        <g v-for="(t, i) in tiles" :key="'t' + i" :transform="place(t)">
          <polyline v-for="p in t.trunk" :key="p" class="trunk" :points="p" />
        </g>

        <g class="names">
          <text v-for="(l, i) in labels" :key="i" :class="l.kind" :transform="labelPlace(l)">{{ l.text }}</text>
        </g>

        <g v-for="(s, i) in tubes" :key="'u' + i" :transform="at(s)">
          <circle r="13" fill="#fff" />
          <rect x="-13.500" y="-4" width="27" height="8" fill="#fff" />
          <circle r="9" fill="#fff" stroke="#e42021" stroke-width="3.500" />
          <rect x="-12" y="-2.500" width="24" height="5" fill="#373c92" />
        </g>
        <g transform="translate(208 1099)">
          <circle r="13" fill="#fff" />
          <circle r="9" fill="#fff" stroke="#f6b700" stroke-width="3.500" />
          <rect x="-12" y="-2.500" width="24" height="5" fill="#373c92" />
        </g>
        <g v-for="(s, i) in stations" :key="'n' + i" :transform="at(s)" fill="none" stroke-linejoin="miter">
          <path d="M-14,-3.700H14M-14,3.700H14M-6,-8L4,-3.700L-5,3.700L5,8" stroke="#fff" stroke-width="6.500" />
          <path d="M-13.500,-3.700H13.500M-13.500,3.700H13.500" stroke="#f0202d" stroke-width="3" />
          <path d="M-6,-8L4,-3.700L-5,3.700L5,8" stroke="#f0202d" stroke-width="2.800" />
        </g>
        <g transform="translate(347.500 1019.500)">
          <rect x="-18.500" y="-18.500" width="37" height="37" rx="4" fill="#fff" />
          <rect x="-16.500" y="-16.500" width="33" height="33" rx="3" fill="#1a73e8" />
          <path d="M-10.500,-7C-10.500,-14 10.500,-14 10.500,-7V5C10.500,8 8.500,9 6.500,9.500L9,12H5.500L3,9.500H-3L-5.500,12H-9L-6.500,9.500C-8.500,9 -10.500,8 -10.500,5Z" fill="#fff" />
          <path d="M-7.500,-7H-1.500V-1.500H-7.500ZM1.500,-7H7.500V-1.500H1.500Z" fill="#1a73e8" />
          <circle cx="-5" cy="4" r="1.800" fill="#1a73e8" />
          <circle cx="5" cy="4" r="1.800" fill="#1a73e8" />
        </g>

        <g class="pin" transform="translate(319 1257)">
          <path class="body sight-fill" :d="pinShape" />
          <path d="M-16,-5.500V-8L0,-17.500L16,-8V-5.500H14V14H16V16.500H-16V14H-14V-5.500Z" fill="#fff" />
          <rect x="-9.500" y="-5" width="19" height="18" class="sight-fill" />
          <path d="M-5.500,10V-2L0,5L5.500,-2V10" fill="none" stroke="#fff" stroke-width="3.500" />
        </g>
        <g class="pin" transform="translate(830.500 1237)">
          <path class="body sight-fill" :d="pinShape" />
          <path d="M-1.500,-14C4,-11 11,-11 16.500,-14V-2C16.500,3 12,6 8,5.500L-1.500,-1Z" fill="#fff" />
          <path d="M-17,-3C-12,1 -3,1 2,-3V8C2,14 -3,18 -7.500,18S-17,14 -17,8Z" fill="#fff" stroke="#12b5cb" stroke-width="1" />
          <path d="M-13.500,6H-10.500V9H-13.500ZM-4.500,6H-1.500V9H-4.500ZM10,-6H13V-3H10ZM3,-6H6V-3H3Z" class="sight-fill" />
        </g>
        <g class="pin" transform="translate(1027.500 1336)">
          <path class="body" fill="#f29900" :d="pinShape" />
          <path d="M-15.500,-16H-12.500V-6H-9.500V-16H-6V-6H-3V-16H0V-5C0,-1 -2,1 -5,2V18H-9.500V2C-13,1 -15.500,-1 -15.500,-5ZM12,-16V18H7V3H3.500V-6C3.500,-12 7,-16 12,-16Z" fill="#fff" />
        </g>
        <g v-for="s in [{ x: 355.5, y: 1721 }, { x: 943, y: 1627.5 }]" :key="s.x" class="pin" :transform="at(s)">
          <path class="body sight-fill" :d="pinShape" />
          <path d="M-6,-14H5L9,-8H18.500V15H-18V-1H-6Z" fill="#fff" />
          <path d="M-13,-14V-4.500M-18,-9.300H-8" fill="none" stroke="#fff" stroke-width="3.500" />
          <circle cx="1.500" cy="2.500" r="7" class="sight-fill" />
        </g>
        <g class="pin" transform="translate(1099.500 1745)">
          <path class="body" fill="#5491f5" :d="pinShape" />
          <path d="M-19,-13.500H-12L-4,8H13" fill="none" stroke="#fff" stroke-width="3.200" />
          <path d="M-10.500,-8H17L13,4H-5.500Z" fill="#fff" />
          <circle cx="-7" cy="15.500" r="3.200" fill="#fff" />
          <circle cx="11" cy="15.500" r="3.200" fill="#fff" />
        </g>

        <text class="brand" x="64" y="1789">
          <tspan fill="#4285f4">G</tspan><tspan fill="#ea4335">o</tspan><tspan fill="#fbbc04">o</tspan><tspan fill="#4285f4">g</tspan><tspan fill="#34a853">l</tspan><tspan fill="#ea4335">e</tspan>
        </text>

        <g class="courier" transform="translate(225 1405)">
          <circle r="54" fill="#fff" />
          <circle r="41" fill="#2b2f36" />
        </g>
        <path
          transform="translate(1015.500 1189)"
          fill-rule="evenodd"
          d="M0,-44C-24,-44 -44,-24 -44,0C-44,26 -24,50 0,76C24,50 44,26 44,0C44,-24 24,-44 0,-44ZM0,-22.500A22.500,22.500 0 1 1 0,22.500A22.500,22.500 0 1 1 0,-22.500Z"
        />
      </svg>
    </section>

    <section class="card order">
      <h2 class="number">#242998</h2>
      <table class="lines">
        <tbody>
          <tr class="item">
            <td class="qty">1x</td>
            <td>Shakshuka</td>
            <td class="price">£9.45</td>
          </tr>
        </tbody>
        <tbody>
          <tr v-for="line in totals" :key="line.label">
            <th colspan="2" scope="row">{{ line.label }}</th>
            <td class="price">{{ line.price }}</td>
          </tr>
        </tbody>
      </table>
    </section>

    <div class="home-bar" aria-hidden="true"></div>
  </main>
</template>

<style>
body {
  background: #f2f1f7;
}
</style>

<style scoped>
.screen {
  display: flex;
  flex-direction: column;
  box-sizing: border-box;
  min-height: 100vh;
  padding: 0 45px;
  background: #f2f1f7;
  color: #000;
  font-family: 'Noto Sans CJK SC', 'Noto Sans', sans-serif;
}
.status {
  display: flex;
  align-items: center;
  justify-content: space-between;
  height: 135px;
  padding: 0 18px 0 63px;
}
.clock {
  font: 600 48px/60px Inter, sans-serif;
}
.indicators {
  display: flex;
  gap: 19px;
}
.indicators svg {
  height: 38px;
}
.signal {
  fill: #c6c5ca;
}
.nav {
  display: flex;
  align-items: center;
  height: 126px;
}
.back {
  display: flex;
  margin-left: -8px;
  padding: 18px 0;
  border: 0;
  background: none;
}
.back svg {
  width: 36px;
  height: 60px;
  fill: none;
  stroke: #000;
  stroke-width: 7;
  stroke-linecap: round;
  stroke-linejoin: round;
}
.title {
  margin: 21px 15px 92px;
  font-size: 85px;
  font-weight: 500;
  line-height: 100px;
}
.card {
  border-radius: 45px;
  background: #fff;
}
.arrival {
  display: flex;
  justify-content: space-between;
  padding: 33px 60px 47px 48px;
}
.arrival p {
  margin: 0;
  font-size: 45px;
}
.arrival .caption {
  color: #8e8e8e;
  line-height: 66px;
}
.arrival .window {
  font-size: 64px;
  font-weight: 500;
  line-height: 104px;
}
.arrival .state {
  line-height: 80px;
}
.tick {
  width: 90px;
  height: 90px;
  margin-top: 24px;
  fill: none;
  stroke: #000;
  stroke-width: 5;
  stroke-linecap: round;
  stroke-linejoin: round;
}
.map {
  margin: 120px 0 150px;
  border-radius: 45px;
  overflow: hidden;
  background: #e8e8e8;
}
.map svg {
  display: block;
  width: 100%;
}
.campus {
  fill: #e2e6ea;
}
.built {
  fill: #fdf5dc;
}
.health {
  fill: #fbe6e5;
}
.park {
  fill: #cde7cd;
}
.water {
  fill: #aadaff;
}
.canal,
.rail,
.lane,
.road-edge,
.road,
.trunk-edge,
.trunk {
  fill: none;
  stroke-linejoin: round;
}
.canal {
  stroke: #aadaff;
  stroke-width: 11;
}
.rail {
  stroke: #d4d8dc;
  stroke-width: 6;
}
.lane {
  stroke: #fff;
  stroke-width: 5;
}
.road-edge {
  stroke: #cfd1d4;
  stroke-width: 20;
}
.road {
  stroke: #fff;
  stroke-width: 15;
  stroke-linecap: round;
}
.trunk-edge {
  stroke: #f8d067;
  stroke-width: 38;
}
.trunk {
  stroke: #ffefaa;
  stroke-width: 24;
  stroke-linecap: round;
}
.names {
  font-family: Inter, sans-serif;
  paint-order: stroke;
  stroke: rgba(255, 255, 255, 0.7);
  stroke-width: 8px;
  stroke-linejoin: round;
  text-anchor: middle;
}
.street {
  fill: #6d7a84;
  font-size: 25px;
  font-weight: 500;
  dominant-baseline: central;
}
.trunk-name {
  fill: #7a3e06;
  font-size: 32px;
  font-weight: 400;
  dominant-baseline: central;
}
.district {
  fill: #909fb8;
  font-size: 26px;
  font-weight: 500;
  letter-spacing: 3px;
}
.borough {
  fill: #66758a;
  font-size: 43px;
  font-weight: 500;
  letter-spacing: 3px;
}
.city {
  fill: #4a4f57;
  font-size: 57px;
  font-weight: 500;
  letter-spacing: 2px;
}
.suburb {
  fill: #50555b;
  font-size: 36px;
}
.poi {
  font-size: 38px;
}
.poi.start {
  text-anchor: start;
}
.poi.end {
  text-anchor: end;
}
.sight {
  fill: #0b8793;
}
.food {
  fill: #d66e00;
}
.shop {
  fill: #1a73e8;
}
.pin .body {
  stroke: #fff;
  stroke-width: 5px;
  paint-order: stroke;
}
.sight-fill {
  fill: #12b5cb;
}
.brand {
  font: 500 53px Lato, sans-serif;
  paint-order: stroke;
  stroke: rgba(255, 255, 255, 0.6);
  stroke-width: 10px;
  stroke-linejoin: round;
}
.courier {
  filter: drop-shadow(0 6px 8px rgba(0, 0, 0, 0.4));
}
.order {
  flex: 1;
  border-radius: 45px 45px 0 0;
}
.number {
  margin: 0 0 15px 60px;
  border-bottom: 2px solid #c8c7cc;
  font-size: 53px;
  font-weight: 500;
  line-height: 178px;
}
.lines {
  width: 100%;
  border-collapse: collapse;
  font-size: 42px;
  line-height: 150px;
}
.lines td,
.lines th {
  padding: 0;
  font-weight: 400;
  text-align: left;
}
.lines .item td {
  padding-bottom: 30px;
}
.lines .item .qty,
.lines th {
  padding-left: 60px;
}
.lines .qty {
  width: 90px;
}
.lines .price {
  padding-right: 60px;
  text-align: right;
}
.home-bar {
  position: fixed;
  bottom: 24px;
  left: 50%;
  width: 444px;
  height: 15px;
  margin-left: -222px;
  border-radius: 8px;
  background: #000;
}
</style>
